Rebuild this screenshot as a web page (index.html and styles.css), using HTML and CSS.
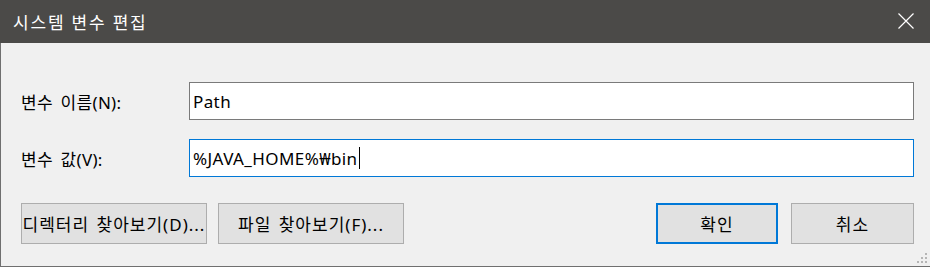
FILE: index.html
```html
<!DOCTYPE html>
<html lang="ko">
<head>
  <meta charset="UTF-8" />
  <title>시스템 변수 편집</title>
  <link rel="stylesheet" href="styles.css">
</head>
<body>
  <div class="window">
    <div class="titlebar">
      <span class="title">시스템 변수 편집</span>
      <svg class="close" width="16" height="16" viewBox="0 0 16 16">
        <path d="M0.5 0.5 L15.5 15.5 M15.5 0.5 L0.5 15.5" stroke="#ffffff" stroke-width="1.2" fill="none" />
      </svg>
    </div>
    <div class="content">
      <div class="row">
        <label class="label">변수 이름(N):</label>
        <div class="field">Path</div>
      </div>
      <div class="row">
        <label class="label">변수 값(V):</label>
        <div class="field active">%JAVA_HOME%₩bin<span class="caret"></span></div>
      </div>
      <div class="buttons">
        <div class="group">
          <button class="btn wide">디렉터리 찾아보기(D)...</button>
          <button class="btn wide">파일 찾아보기(F)...</button>
        </div>
        <div class="group right">
          <button class="btn primary">확인</button>
          <button class="btn">취소</button>
        </div>
      </div>
      <div class="grip">
        <i></i><i></i><i></i><i></i><i></i><i></i>
      </div>
    </div>
  </div>
  <div class="below"></div>
</body>
</html>
```

FILE: styles.css
```css
:root {
  --title-bg: #4b4a48;
  --body-bg: #f0f0f0;
  --blue: #0078d7;
  --btn-bg: #e1e1e1;
}
html, body {
  margin: 0;
  padding: 0;
  background: #ffffff;
}
body {
  font-family: "Noto Sans", "Noto Sans CJK KR", sans-serif;
  color: #000;
  width: 930px;
  height: 268px;
  overflow: hidden;
}
.window {
  height: 267px;
  box-sizing: border-box;
  display: flex;
  flex-direction: column;
  border-bottom: 1px solid #6f6f6f;
}
.titlebar {
  height: 43px;
  flex: none;
  background: var(--title-bg);
  display: flex;
  align-items: center;
  justify-content: space-between;
  padding: 0 16px 0 13px;
}
.title {
  color: #ffffff;
  font-size: 17px;
  letter-spacing: 1.8px;
  margin-top: -1px;
}
.close {
  display: block;
  margin-top: -1px;
}
.content {
  flex: 1;
  background: var(--body-bg);
  border-left: 1px solid #6f6f6f;
  padding: 39px 16px 0 20px;
  position: relative;
  display: flex;
  flex-direction: column;
  gap: 19px;
}
.row {
  display: flex;
  align-items: center;
  height: 38px;
}
.label {
  width: 168px;
  flex: none;
  font-size: 17px;
  letter-spacing: 0.3px;
  word-spacing: 3px;
}
.field {
  flex: 1;
  height: 38px;
  box-sizing: border-box;
  border: 1px solid #7a7a7a;
  background: #ffffff;
  font-size: 17px;
  letter-spacing: 0.4px;
  padding: 0 3px;
  display: flex;
  align-items: center;
}
.field.active {
  border-color: var(--blue);
}
.caret {
  display: inline-block;
  width: 1px;
  height: 22px;
  background: #000;
  margin-left: 1px;
}
.buttons {
  display: flex;
  justify-content: space-between;
  margin-top: 7px;
}
.group {
  display: flex;
  gap: 11px;
}
.group.right {
  gap: 13px;
}
.btn {
  font-family: inherit;
  font-size: 17px;
  letter-spacing: 1px;
  word-spacing: 2px;
  height: 41px;
  width: 123px;
  background: var(--btn-bg);
  border: 1px solid #adadad;
  padding: 0;
  color: #000;
  white-space: nowrap;
}
.btn.wide {
  width: 186px;
}
.btn.primary {
  width: 122px;
  border: 2px solid var(--blue);
}
.grip {
  position: absolute;
  right: 3px;
  bottom: 3px;
  width: 10px;
  height: 10px;
  display: grid;
  grid-template-columns: repeat(3, 2px);
  grid-template-rows: repeat(3, 2px);
  gap: 2px;
}
.grip i {
  background: #b5b5b5;
}
.grip i:nth-child(1) { grid-column: 3; grid-row: 1; }
.grip i:nth-child(2) { grid-column: 2; grid-row: 2; }
.grip i:nth-child(3) { grid-column: 3; grid-row: 2; }
.grip i:nth-child(4) { grid-column: 1; grid-row: 3; }
.grip i:nth-child(5) { grid-column: 2; grid-row: 3; }
.grip i:nth-child(6) { grid-column: 3; grid-row: 3; }
.below {
  height: 1px;
  background: #ffffff;
}
```
